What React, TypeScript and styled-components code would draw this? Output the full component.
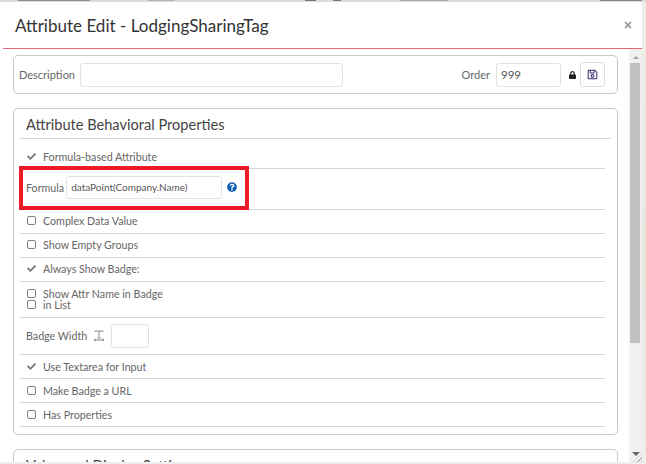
import React from 'react';
import styled, { createGlobalStyle } from 'styled-components';
import { FaCheck, FaLock, FaQuestionCircle, FaTimes, FaRegSave } from 'react-icons/fa';

const GlobalStyle = createGlobalStyle`
  html, body { margin: 0; padding: 0; background: #eeeeee; }
  body { font-family: Lato, "Open Sans", sans-serif; color: #555; overflow: hidden; }
`;

const flags = [
  { label: 'Complex Data Value', checked: false },
  { label: 'Show Empty Groups', checked: false },
  { label: 'Always Show Badge:', checked: true },
];

const lowerFlags = [
  { label: 'Use Textarea for Input', checked: true },
  { label: 'Make Badge a URL', checked: false },
  { label: 'Has Properties', checked: false },
];

const App: React.FC = () => (
  <>
    <GlobalStyle />
    <Screen>
      <TopStrip />
      <Modal>
        <Header>
          <Title>Attribute Edit - LodgingSharingTag</Title>
          <CloseIcon />
        </Header>
        <Body>
          <Content>
            <TopCard>
              <FieldLabel>Description</FieldLabel>
              <TextInput $width={263} />
              <OrderLabel>Order</OrderLabel>
              <TextInput $width={65} defaultValue="999" />
              <LockIcon />
              <SaveButton><SaveIcon /></SaveButton>
            </TopCard>
            <Card>
              <CardTitle>Attribute Behavioral Properties</CardTitle>
              <FirstRow $height={30}>
                <Tick /><RowLabel>Formula-based Attribute</RowLabel>
              </FirstRow>
              <FormulaRow>
                <FormulaLabel>Formula</FormulaLabel>
                <FormulaInput $width={156} defaultValue="dataPoint(Company.Name)" />
                <HelpIcon />
                <Highlight />
              </FormulaRow>
              {flags.map((f) => (
                <UpperRow key={f.label} $height={24}>
                  {f.checked ? <Tick /> : <Box />}
                  <RowLabel>{f.label}</RowLabel>
                </UpperRow>
              ))}
              <StackRow>
                <StackBoxes><Box /><Box /></StackBoxes>
                <StackText>Show Attr Name in Badge<br />in List</StackText>
              </StackRow>
              <WidthRow>
                <FormulaLabel>Badge Width</FormulaLabel>
                <WidthIcon viewBox="0 0 12 11" aria-hidden="true">
                  <path d="M2 2V1h8v1M6 1v7M4.5 8h3M1 10h10M2.5 8.8L1 10l1.5 1M9.5 8.8L11 10l-1.5 1" />
                </WidthIcon>
                <TextInput $width={38} />
              </WidthRow>
              {lowerFlags.map((f) => (
                <Row key={f.label} $height={24}>
                  {f.checked ? <Tick /> : <Box />}
                  <RowLabel>{f.label}</RowLabel>
                </Row>
              ))}
            </Card>
            <Card>
              <CardTitle>Value and Display Settings</CardTitle>
            </Card>
          </Content>
          <Scrollbar>
            <ArrowUp />
            <Track><Thumb /></Track>
            <Corner><ArrowDown /></Corner>
          </Scrollbar>
        </Body>
      </Modal>
    </Screen>
  </>
);

const Screen = styled.div`
  width: 646px;
  height: 464px;
  overflow: hidden;
  display: flex;
  flex-direction: column;
  background: linear-gradient(#f0efe6, #e6e8dc 60%, #eeeeee);
`;

const TopStrip = styled.div`
  height: 2px;
  flex: none;
  background:
    linear-gradient(90deg,
      transparent 18px, #8c8c8c 18px, #8c8c8c 90px, transparent 90px,
      transparent 148px, #b4b4b4 148px, #b4b4b4 175px, transparent 175px,
      transparent 305px, #777 305px, #777 316px, transparent 316px,
      transparent 333px, #777 333px, #777 341px, transparent 341px,
      transparent 400px, #aaa 400px, #aaa 448px, transparent 448px,
      transparent 600px, #888 600px, #888 642px, transparent 642px) 0 0 / 100% 1px no-repeat,
    #dddddd;
`;

const Modal = styled.div`
  width: 642px;
  height: 460px;
  flex: none;
  background: #fff;
  display: flex;
  flex-direction: column;
`;

const Header = styled.div`
  height: 47px;
  flex: none;
  box-sizing: border-box;
  margin-left: 3px;
  padding: 0 9px 0 12px;
  display: flex;
  align-items: center;
  justify-content: space-between;
  border-bottom: 1px solid #e4697a;
`;

const Title = styled.h1`
  margin: 0;
  font-size: 17.05px;
  font-weight: 400;
  color: #333;
`;

const CloseIcon = styled(FaTimes)`
  width: 10px;
  height: 10px;
  color: #9c9c9c;
`;

const Body = styled.div`
  flex: 1;
  min-height: 0;
  display: flex;
  justify-content: space-between;
  padding-left: 13px;
`;

const Content = styled.div`
  width: 605px;
  flex: none;
  overflow: hidden;
  padding-top: 6px;
`;

const Card = styled.section`
  box-sizing: border-box;
  height: 327px;
  margin-bottom: 14px;
  padding: 0 6px;
  border: 1px solid #c8c8c8;
  border-radius: 5px;
`;

const TopCard = styled(Card)`
  height: 39px;
  padding: 0 12px 0 5px;
  display: flex;
  align-items: center;
`;

const FieldLabel = styled.label`
  font-size: 11px;
  color: #666;
  margin-right: 5px;
`;

const OrderLabel = styled(FieldLabel)`
  margin-left: auto;
  margin-right: 6px;
`;

const TextInput = styled.input<{ $width: number }>`
  box-sizing: border-box;
  width: ${(p) => p.$width}px;
  height: 24px;
  padding: 0 4px;
  border: 1px solid #e2e2e2;
  border-radius: 3px;
  outline: none;
  font-family: inherit;
  font-size: 11.5px;
  color: #555;
`;

const FormulaInput = styled(TextInput)`
  height: 23px;
  font-size: 10px;
`;

const LockIcon = styled(FaLock)`
  width: 7px;
  height: 8px;
  margin: 0 4px 0 8px;
  color: #222;
`;

const SaveButton = styled.button`
  box-sizing: border-box;
  width: 25px;
  height: 25px;
  padding: 0;
  display: flex;
  align-items: center;
  justify-content: center;
  background: #fff;
  border: 1px solid #ddd;
  border-radius: 3px;
`;

const SaveIcon = styled(FaRegSave)`
  width: 11px;
  height: 11px;
  color: #3f2d74;
`;

const CardTitle = styled.h2`
  margin: 0;
  height: 30px;
  box-sizing: border-box;
  padding: 7px 0 0 6px;
  font-size: 14.6px;
  line-height: 18px;
  font-weight: 400;
  color: #444;
  border-bottom: 1px solid #d6d6d6;
`;

const Row = styled.div<{ $height: number }>`
  box-sizing: border-box;
  height: ${(p) => p.$height}px;
  margin-right: 6px;
  padding-left: 7px;
  display: flex;
  align-items: center;
  gap: 7px;
  border-bottom: 1px solid #d6d6d6;
`;

const FirstRow = styled(Row)`
  padding-top: 5px;
`;

const UpperRow = styled(Row)`
  padding-bottom: 2px;
`;

const FormulaRow = styled(Row).attrs({ $height: 41 })`
  position: relative;
  padding-left: 6px;
  padding-bottom: 4px;
  gap: 2px;
`;

const Highlight = styled.div`
  position: absolute;
  left: -1px;
  top: -3px;
  width: 230px;
  height: 44px;
  box-sizing: border-box;
  border: 4px solid #ed1c24;
`;

const StackRow = styled(Row).attrs({ $height: 36 })`
  padding-bottom: 2px;
`;

const WidthRow = styled(Row).attrs({ $height: 37 })`
  padding-left: 6px;
  padding-bottom: 1px;
  gap: 6px;
`;

const StackBoxes = styled.div`
  display: flex;
  flex-direction: column;
  gap: 2px;
`;

const StackText = styled.div`
  font-size: 10.7px;
  line-height: 11px;
  color: #666;
`;

const RowLabel = styled.span`
  font-size: 10.7px;
  color: #666;
`;

const FormulaLabel = styled.span`
  font-size: 10.7px;
  color: #666;
`;

const Tick = styled(FaCheck)`
  width: 9px;
  height: 9px;
  flex: none;
  color: #777;
`;

const Box = styled.span`
  display: block;
  box-sizing: border-box;
  width: 9px;
  height: 9px;
  flex: none;
  border: 1px solid #808080;
  border-radius: 2px;
`;

const HelpIcon = styled(FaQuestionCircle)`
  width: 10px;
  height: 10px;
  margin-left: 3px;
  color: #0f62b0;
`;

const WidthIcon = styled.svg`
  width: 12px;
  height: 11px;
  flex: none;
  fill: none;
  stroke: #888;
  stroke-width: 1;
`;

const Scrollbar = styled.div`
  width: 13px;
  flex: none;
  display: flex;
  flex-direction: column;
  background: #f1f1f1;
`;

const Track = styled.div`
  flex: 1;
  padding: 0 2px 0 1px;
`;

const Thumb = styled.div`
  height: 280px;
  background: #c1c1c1;
`;

const ArrowUp = styled.div`
  flex: none;
  width: 0;
  height: 0;
  margin: 7px auto 4px;
  border-left: 3px solid transparent;
  border-right: 3px solid transparent;
  border-bottom: 3px solid #a3a3a3;
`;

const Corner = styled.div`
  position: relative;
  flex: none;
  height: 13px;

  &::after {
    content: '';
    position: absolute;
    right: 0;
    bottom: 0;
    width: 9px;
    height: 9px;
    background: repeating-linear-gradient(135deg, #b5b5b5 0 1px, transparent 1px 3px);
    clip-path: polygon(100% 0, 100% 100%, 0 100%);
  }
`;

const ArrowDown = styled.div`
  width: 0;
  height: 0;
  margin: 3px auto 0;
  border-left: 4px solid transparent;
  border-right: 4px solid transparent;
  border-top: 4px solid #666;
`;

export default App;
